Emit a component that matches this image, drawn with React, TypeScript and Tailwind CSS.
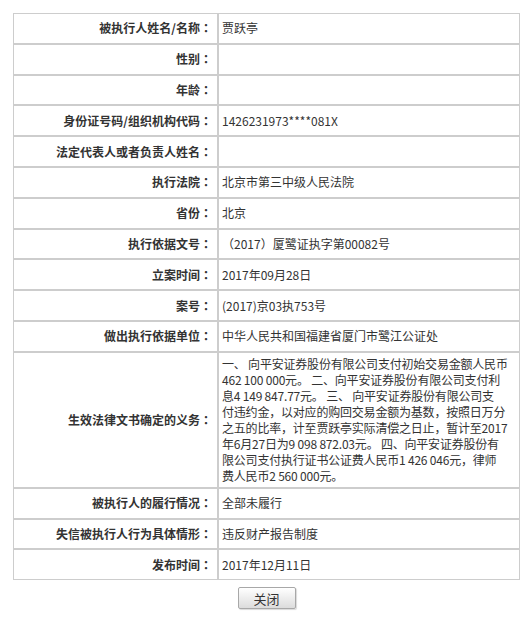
import React from 'react';

interface InfoRow {
  label: string;
  value?: string;
  lines?: string[];
}

const rows: InfoRow[] = [
  { label: '被执行人姓名/名称', value: '贾跃亭' },
  { label: '性别', value: '' },
  { label: '年龄', value: '' },
  { label: '身份证号码/组织机构代码', value: '1426231973****081X' },
  { label: '法定代表人或者负责人姓名', value: '' },
  { label: '执行法院', value: '北京市第三中级人民法院' },
  { label: '省份', value: '北京' },
  { label: '执行依据文号', value: '（2017）厦鹭证执字第00082号' },
  { label: '立案时间', value: '2017年09月28日' },
  { label: '案号', value: '(2017)京03执753号' },
  { label: '做出执行依据单位', value: '中华人民共和国福建省厦门市鹭江公证处' },
  {
    label: '生效法律文书确定的义务',
    // 按原图的换行分行
    lines: [
      '一、 向平安证券股份有限公司支付初始交易金额人民币',
      '462 100 000元。 二、向平安证券股份有限公司支付利',
      '息4 149 847.77元。 三、 向平安证券股份有限公司支',
      '付违约金，以对应的购回交易金额为基数，按照日万分',
      '之五的比率，计至贾跃亭实际清偿之日止，暂计至2017',
      '年6月27日为9 098 872.03元。 四、向平安证券股份有',
      '限公司支付执行证书公证费人民币1 426 046元，律师',
      '费人民币2 560 000元。',
    ],
  },
  { label: '被执行人的履行情况', value: '全部未履行' },
  { label: '失信被执行人行为具体情形', value: '违反财产报告制度' },
  { label: '发布时间', value: '2017年12月11日' },
];

const App: React.FC = () => {
  return (
    <div
      className="w-[529px] h-[623px] bg-white text-[12px] text-[#333] overflow-hidden"
      style={{ fontFamily: '"Noto Sans CJK SC", "Noto Sans", sans-serif' }}
    >
      <div className="pt-[13px] pl-[13px]">
        <div className="w-[507px] flex flex-col">
          {rows.map(row => (
            <div key={row.label} className={`flex ${row.lines ? '' : 'h-[30.8px]'}`}>
              <div className="w-[205px] shrink-0 border border-[#cdcdcd] flex items-center justify-end pr-[5px] font-bold">
                {row.label}
                {/* 居中的全角冒号 */}
                <span style={{ fontFamily: '"Noto Sans CJK TC", sans-serif' }}>：</span>
              </div>
              <div className="flex-1 border border-[#cdcdcd] flex items-center pl-[3px]">
                {row.lines ? (
                  <div className="py-[3px] leading-[16px] tracking-[-0.2px]">
                    {row.lines.map(line => (
                      <div key={line} className="whitespace-nowrap">
                        {line}
                      </div>
                    ))}
                  </div>
                ) : (
                  <span className="whitespace-nowrap">{row.value}</span>
                )}
              </div>
            </div>
          ))}
        </div>
        <div className="w-[507px] flex justify-center mt-[7px]">
          <button
            type="button"
            className="w-[58px] h-[22px] border border-[#a8a8a8] rounded-[2px] bg-gradient-to-b from-[#ffffff] to-[#dcdcdc] shadow-[1px_1px_1px_rgba(0,0,0,0.15)] text-[13px] text-[#333] leading-none"
          >
            关闭
          </button>
        </div>
      </div>
    </div>
  );
};

export default App;
